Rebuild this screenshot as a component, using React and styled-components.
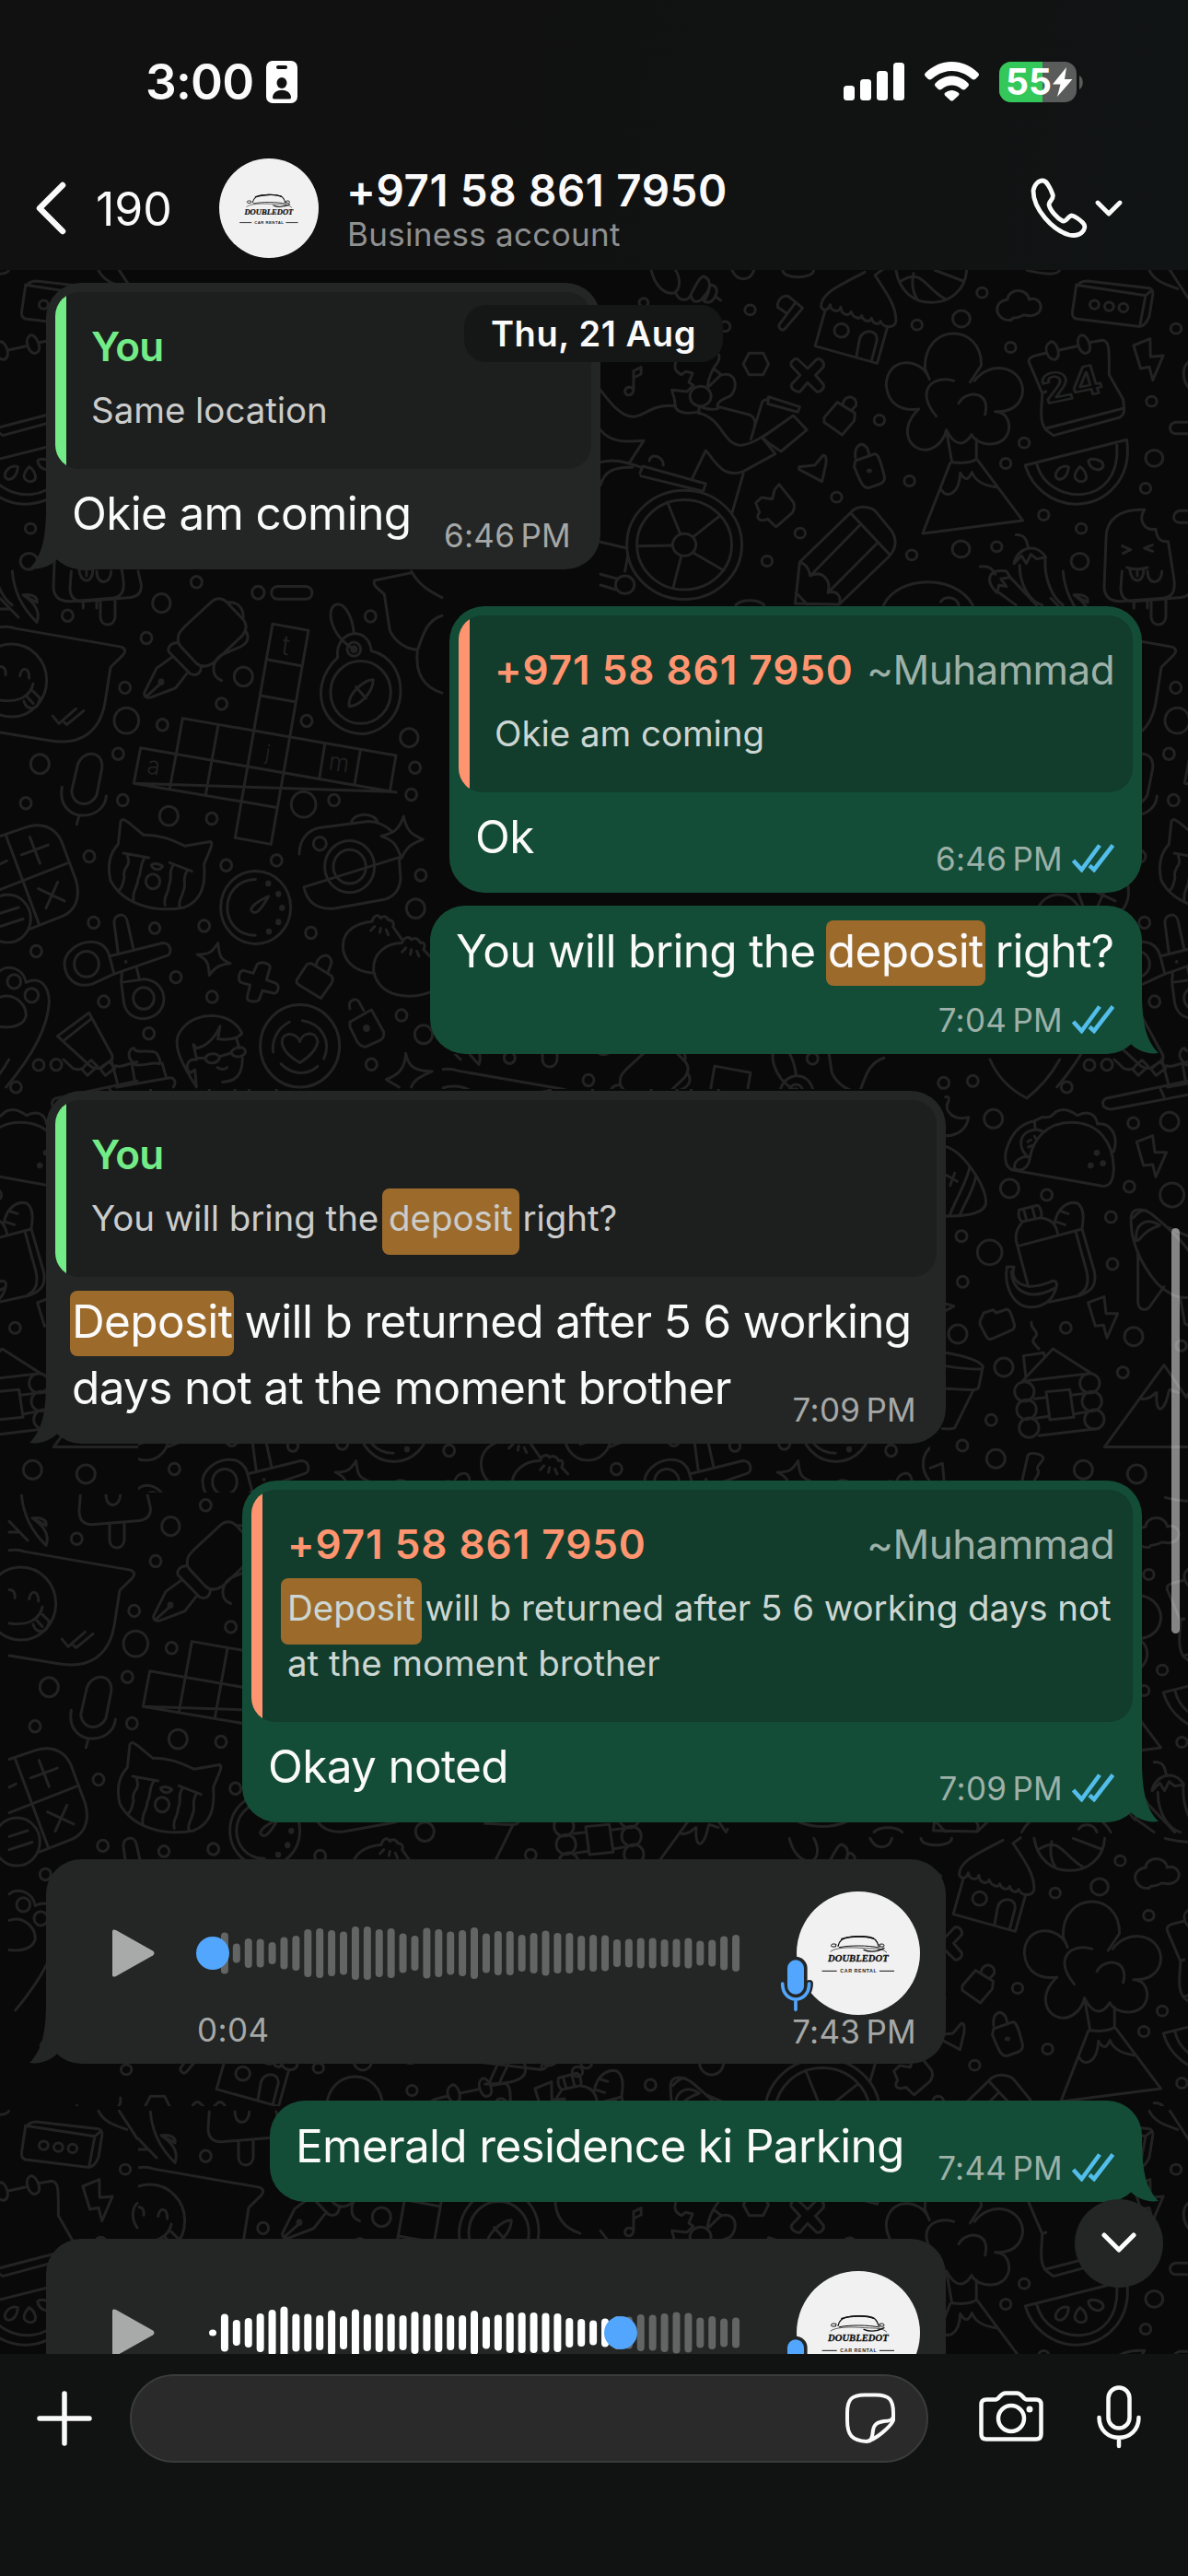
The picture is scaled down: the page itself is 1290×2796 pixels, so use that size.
import styled, { createGlobalStyle, css } from "styled-components";

const GlobalStyle = createGlobalStyle`
  * {
    box-sizing: border-box;
  }
  body {
    margin: 0;
    background-color: #090909;
    font-family: Inter, "Liberation Sans", sans-serif;
    -webkit-font-smoothing: antialiased;
  }
`;

/* wallpaper doodles, each sheet is drawn in its own scale */
const SHEETS = [
  {
    transform: "translate(650 290) scale(0.4082 0.3333)",
    repeat: [[0, 0], [-1141, 0], [0, 1998], [-1141, 1998]],
    squash: 1.16,
    rings: [
      [403, 139, 14], [847, 188, 14], [965, 168, 23], [1020, 83, 14], [1096, 261, 14],
      [1536, 200, 14], [1471, 437, 14], [747, 498, 14], [1132, 572, 14], [1083, 639, 14],
      [827, 696, 14], [1478, 622, 23], [1455, 720, 14], [1184, 807, 14], [633, 749, 14],
      [536, 866, 14], [448, 957, 14], [833, 937, 14], [964, 918, 23], [1059, 910, 14],
      [1284, 851, 14], [1280, 958, 23], [336, 193, 14], [646, 206, 19],
      [1319, 122, 12], [1358, 128, 12], [1396, 132, 12], [120, 115, 12],
      [228, 904, 31], [228, 904, 126], [228, 904, 153], [70, 1034, 25], [271, 420, 28],
    ],
    dots: [[720, 663, 6]],
    paths: [
      "M140 10C150 60 175 90 200 84C222 70 215 30 205 10M205 84C215 115 240 110 245 90C262 50 270 30 280 30C300 40 300 70 280 95C270 115 250 120 247 95M280 110C300 80 290 60 300 58C315 62 320 80 305 105C295 120 280 115 280 105M310 95L325 108",
      "M505 95C490 90 475 105 476 130L500 150M505 95L543 133L496 200C490 210 478 200 480 188L522 118",
      "M708 16C640 60 590 85 592 130C600 145 612 140 616 122C618 145 640 150 644 130C646 158 668 160 672 145C676 165 696 172 700 158C704 178 724 180 726 166C730 185 745 190 750 176C756 200 790 200 791 175C792 130 770 90 735 26L755 8M603 140L576 257L741 313L768 196M686 290L694 235C700 200 745 200 740 240L726 305",
      "M791 10C800 80 840 115 885 115C930 115 975 80 979 10M838 20C830 60 840 90 848 105M805 45C860 0 870 70 920 102M895 10L970 45",
      "M1088 105C1088 70 1140 65 1145 105C1175 90 1195 150 1150 158C1140 160 1130 150 1124 160C1110 170 1100 160 1098 172C1060 180 1040 115 1088 105Z",
      "M1270 65C1280 45 1295 45 1300 45L1465 68C1475 72 1475 80 1474 90L1465 160C1455 190 1445 195 1435 193L1270 168C1258 162 1260 150 1261 140ZM1270 58L1455 92L1472 75M1455 92L1440 190",
      "M385 315L400 280H438L452 315L438 350H400Z",
      "M530 300L556 330L580 300C592 295 602 310 598 325L577 352L598 382C602 395 590 408 580 405L556 376L536 405C524 408 510 395 513 382L536 352L513 322C508 310 520 295 530 300Z",
      "M93 400V338L113 326V348L93 360M93 400C88 425 68 418 70 402C74 385 90 390 93 400",
      "M320 285C325 320 300 310 290 385M205 310C200 330 205 340 220 350L232 340L250 345L240 375L252 385L235 405L195 400C198 420 205 430 203 450C205 475 240 480 268 470M330 350C370 340 370 400 350 420C330 430 310 440 318 460C290 470 280 455 268 455L265 475M308 332L326 350L292 390",
      "M5 400C30 440 60 490 95 487C130 480 140 445 205 452M265 475C330 490 330 580 380 580C410 575 440 550 480 515M320 455L400 480C420 490 420 510 405 560M405 560L435 440C440 430 450 430 452 432M452 422L535 455L530 472L450 445ZM435 555L518 483L554 530L485 600L455 575ZM435 555L470 608L385 665C330 690 310 630 285 597L250 685M5 530C30 570 70 570 120 565L80 640M5 635C40 625 60 630 115 652M110 670L118 648L285 705L278 730L112 680M135 630C140 600 175 620 172 645M385 672L355 800",
      "M600 490L635 440L682 475L680 500L648 546L600 505ZM650 445C655 410 690 420 685 450L672 468",
      "M868 330C865 180 1020 180 1018 320L988 375M868 330L880 365C860 290 765 290 765 385C770 450 810 470 852 462C800 520 820 595 872 595C900 590 920 560 925 530C950 590 975 580 992 545C1010 590 1090 590 1092 520C1090 480 1070 470 1055 470C1110 475 1130 430 1128 395C1120 320 1040 305 1000 370M945 370C890 350 840 400 898 485M958 443C975 400 1045 400 1028 480",
      "M927 545L940 635C970 640 990 638 1005 625V560M935 638L862 867L1128 825L1008 628M912 725C925 755 960 740 962 670C975 700 985 690 993 668C1000 690 1015 710 1062 717",
      "M683 620C680 580 700 565 715 590L720 610M683 630L735 608C742 608 748 620 760 680C762 690 758 700 750 705L720 718C705 722 700 710 680 650Z",
      "M533 650L575 645L597 613C605 612 606 620 605 640L594 698L533 658Z",
      "M418 768L434 750L462 755L468 725L480 707L518 765C524 780 520 790 515 800L472 846L450 820C430 830 415 820 428 798L418 768Z",
      "M1180 410L1145 310C1142 295 1150 290 1190 280M1225 270L1270 258M1306 245L1340 238C1360 240 1358 270 1358 350L1395 430C1400 470 1400 480 1385 490L1210 548L1190 530C1170 500 1180 450 1180 410L1190 405M1190 525L1395 460M1200 245C1215 230 1235 290 1215 300C1195 305 1180 260 1200 245ZM1283 222C1300 215 1320 275 1297 280C1280 285 1265 235 1283 222Z",
      "M1423 255L1467 233L1468 292L1502 288L1474 368L1465 325L1442 330Z",
      "M1135 645L1405 562C1420 690 1350 770 1270 772C1200 770 1150 710 1135 645ZM1165 636C1190 780 1395 790 1378 572M1222 690C1205 680 1225 640 1250 650C1250 670 1240 695 1222 690ZM1280 650C1295 660 1310 700 1280 698C1260 690 1265 670 1280 650ZM1303 630C1310 620 1345 625 1342 650C1330 670 1305 655 1303 630Z",
      "M523 1095L535 960L670 800C690 770 730 780 740 800L780 860C795 890 790 920 770 945L640 1098ZM670 800L772 933M535 960C555 970 560 985 563 1005C595 985 620 1020 610 1060C640 1050 645 1080 640 1095M563 1005L695 840M610 1060L740 900M525 1060L555 1098",
      "M1110 872C1140 870 1140 900 1143 915M1105 965C1110 920 1160 890 1190 945L1165 950L1150 935L1138 965L1125 940ZM1120 970C1120 1040 1150 1090 1180 1100M1188 950C1185 1020 1210 1080 1235 1100M1015 975C1040 970 1050 985 1055 1000M1060 1060C1030 1030 1030 980 1085 990L1095 1010L1070 1015L1085 1040L1065 1035ZM1065 1060L1110 1100M1095 1010L1165 1100",
      "M1452 790C1390 785 1350 820 1350 880L1345 1040C1345 1080 1370 1088 1390 1088L1500 1078C1530 1075 1535 1050 1530 1010L1515 893C1500 895 1485 890 1482 853C1450 860 1435 820 1452 790ZM1393 908L1415 920L1395 932M1473 905L1452 915L1474 925M1405 978C1420 985 1440 985 1460 978M1413 983C1415 1030 1450 1035 1450 983M1433 985V1005M1424 1088V1110M1460 1085V1110",
      "M183 765L217 868M320 812L252 878M105 908L196 906M333 988L252 930M198 1045L220 940M5 895L75 915M5 1000L50 1015M70 990L78 940M45 1050L5 1035M5 710C15 665 40 650 90 652",
      "M758 1100C800 1000 950 1000 995 1100M910 1090C920 1070 950 1070 958 1100M365 1100C380 1080 425 1080 440 1100M1140 10C1170 20 1220 30 1226 10M355 10C370 50 405 45 413 10M490 10C490 40 570 40 572 10M1465 10C1480 50 1520 60 1540 70M1520 10L1568 100M1568 505H1535C1515 510 1515 540 1535 542H1568M1568 793H1545C1525 800 1525 830 1545 832H1568M1568 310C1550 330 1555 370 1568 390",
    ],
    labels: [{ text: "24", x: 1190, y: 445, size: 128, turn: -14 }],
  },
  {
    transform: "translate(0 620) scale(0.3333 0.3571)",
    repeat: [[0, 0], [1141, 0]],
    squash: 0.97,
    rings: [
      [640, 33, 18], [526, 97, 29], [220, 135, 18], [477, 203, 18], [841, 65, 20], [1207, 137, 18],
      [793, 320, 30], [407, 354, 18], [722, 403, 18], [412, 454, 40], [529, 467, 18], [999, 455, 18],
      [1333, 506, 29], [1352, 597, 18], [1340, 679, 18], [385, 555, 18], [130, 586, 30], [84, 705, 18],
      [400, 696, 18], [550, 744, 30], [690, 752, 18], [989, 709, 40], [1088, 696, 18], [291, 867, 18],
      [737, 894, 18], [901, 879, 18], [1042, 828, 21], [1139, 898, 81], [1139, 898, 53], [1371, 924, 18],
      [1354, 1025, 30], [305, 1068, 18], [504, 1085, 17], [665, 1078, 18], [1013, 1099, 18], [118, 1155, 18],
      [282, 1194, 40], [573, 1234, 18], [468, 1298, 34], [338, 1308, 18], [691, 1294, 18], [1308, 1350, 18],
      [485, 1405, 18], [1210, 1499, 18], [183, 1500, 18], [1380, 1408, 29], [833, 1022, 114],
      [977, 1443, 129], [1175, 368, 98], [1153, 237, 22], [1153, 237, 8], [46, 1247, 22], [103, 1289, 22],
      [38, 332, 114], [498, 943, 23], [25, 1056, 75],
    ],
    dots: [[874, 949, 8], [907, 981, 8], [919, 1023, 8], [907, 1066, 8], [876, 1095, 8], [525, 337, 9], [1194, 1389, 10], [410, 1187, 4]],
    paths: [
      "M0 170C20 168 40 170 50 174L395 230C410 235 410 245 400 255L360 292L342 400C325 490 260 530 165 515L0 490M65 318C70 290 95 290 95 325M0 290C15 290 20 300 18 315M108 342C100 380 60 400 0 392M78 395C85 425 125 425 130 385L108 365M85 378L108 402M172 440L192 463L247 418M210 460L218 466L273 424",
      "M232 0L228 50C228 80 245 92 270 92L425 80C455 75 462 60 460 40L450 0M327 92V140C330 170 370 170 375 140V88M315 0C315 45 362 40 362 0",
      "M40 0C45 60 70 110 120 155C130 130 120 100 75 72L120 95C125 75 100 70 75 72M0 82L60 140M0 115H30",
      "M580 205C580 190 585 185 600 170L690 92C705 80 725 80 740 95L795 150C805 165 803 180 790 195L700 275C680 290 660 295 640 280L590 230C580 220 580 215 580 205ZM740 95C775 90 795 115 792 142M803 185C815 210 800 225 770 235L720 255C690 275 685 320 722 332M580 218C555 215 545 235 550 245L620 312C640 320 655 310 655 290M562 260L510 295L470 370C470 385 480 385 490 384L572 355L608 312M478 380L525 340",
      "M903 46H998C1024 50 1022 82 998 85H903C878 82 878 50 903 46Z",
      "M888 160L1005 180L883 830L766 810ZM870 268L982 288M848 378L962 397M595 447L1290 560L1270 670L438 645M595 447L574 555M458 537L1290 672M458 537L436 645L902 718M711 468L670 680M1058 527L1040 632M1174 545L1155 650M574 555L553 660",
      "M1153 190C1150 150 1130 100 1100 100C1060 105 1070 190 1153 237M1100 262C1090 180 1200 160 1210 242C1340 270 1340 470 1190 494C1060 500 990 360 1100 262M1138 411C1130 370 1190 330 1216 330C1215 370 1170 410 1138 411ZM1160 352L1192 386",
      "M1340 5L1220 28C1215 40 1220 45 1252 70L1270 180C1290 220 1330 238 1360 238M1340 0C1370 50 1410 65 1440 80M1440 135C1390 150 1380 190 1360 240C1350 320 1390 355 1440 370",
      "M250 600C260 540 340 540 332 600L315 680C295 720 240 715 233 670ZM202 656C190 720 240 745 275 742C320 740 345 710 346 683M258 742L250 770",
      "M0 805L85 778C150 760 185 790 200 820L248 940C265 1000 240 1035 200 1050L95 1088M0 968L218 888M20 805L128 1075M97 808L130 888M70 862L157 832M125 965L210 1002M188 945L150 1024M0 890L22 880M0 1040L60 1022M0 1080L75 1057",
      "M385 830L393 760C400 750 405 755 420 765L468 802C520 800 570 820 602 835L685 822C695 825 690 835 665 890C670 950 660 1000 600 1022C500 1040 400 1010 360 940C350 900 355 860 385 830ZM402 857L485 871M553 886L625 912M415 865C430 900 395 900 405 930C400 950 400 960 388 970M470 872C450 905 465 910 450 935C450 960 430 970 435 1000M565 893C545 920 565 925 550 955C550 985 530 985 538 1015M610 910C590 940 610 950 598 970C590 1000 580 1000 585 1020M493 893C500 885 520 890 530 897C520 910 500 910 493 893Z",
      "M832 937C710 940 710 1105 832 1107M875 988C860 995 820 1010 818 1030C830 1050 850 1030 875 988Z",
      "M975 860C975 810 1010 785 1040 780L1200 760C1230 760 1260 775 1275 790M1300 870L1305 930C1305 970 1280 995 1240 1000L1090 1025C1030 1030 1000 1005 990 960ZM1145 762C1160 730 1220 735 1230 762M1315 745C1325 790 1340 800 1378 815C1335 830 1325 840 1308 872C1290 830 1285 820 1242 805C1285 795 1300 785 1315 745Z",
      "M385 1162L372 1070C370 1040 410 1035 415 1065L435 1150M358 1170L530 1130C560 1130 560 1165 545 1168L370 1225L300 1255C240 1270 210 1230 210 1190C215 1130 340 1090 358 1175L372 1225M397 1220L395 1250L470 1240C550 1245 560 1350 470 1360C430 1360 405 1340 402 1300L395 1250M445 1205L453 1235",
      "M710 1130C715 1175 720 1180 750 1192C715 1195 700 1205 682 1228C680 1190 675 1180 643 1165C680 1165 690 1160 710 1130ZM1322 1465C1330 1505 1350 1520 1408 1520C1370 1535 1350 1545 1340 1568M1322 1465C1320 1510 1300 1530 1258 1545L1300 1568",
      "M838 1195C850 1185 880 1190 880 1205L868 1242L900 1253C912 1262 905 1280 895 1283L855 1275L845 1300C840 1312 805 1310 805 1295L815 1258L785 1250C772 1240 780 1215 792 1213L825 1222Z",
      "M968 1240L1000 1195C1010 1190 1015 1192 1020 1195L1080 1230C1088 1240 1082 1250 1078 1255L1045 1298L975 1258C965 1252 965 1245 968 1240ZM1030 1195C1040 1160 1080 1160 1080 1190L1068 1220",
      "M1140 1370L1210 1333L1250 1400C1252 1415 1248 1420 1240 1425L1190 1446C1178 1445 1172 1440 1165 1432L1140 1385ZM1140 1330C1130 1300 1165 1295 1170 1310L1185 1335",
      "M1220 1222C1130 1215 1110 1160 1120 1120C1130 1090 1160 1070 1212 1065C1220 1040 1235 1045 1240 1055C1250 1045 1262 1050 1265 1060C1280 1060 1285 1070 1280 1080L1310 1120M1400 1280C1340 1300 1240 1300 1218 1220C1210 1160 1260 1130 1310 1130C1315 1110 1335 1110 1340 1120C1355 1110 1365 1120 1370 1130C1385 1125 1385 1140 1380 1150L1400 1170M1220 1080L1208 1092M1240 1085L1237 1098M1258 1090L1265 1105M1322 1145L1310 1157M1340 1150L1337 1165M1358 1155L1365 1170",
      "M977 1430C965 1395 905 1400 922 1445C930 1465 960 1485 977 1494C1000 1480 1030 1460 1035 1430C1030 1395 985 1400 977 1430ZM943 1370C900 1390 885 1430 890 1462M985 1366C1050 1375 1080 1430 1055 1482M915 1497C950 1530 1000 1535 1035 1505",
      "M187 1413L290 1342L365 1470C370 1485 360 1490 350 1495L325 1510C315 1512 305 1510 295 1505ZM210 1425L298 1360M327 1513L355 1490L375 1510L343 1533Z",
      "M640 1568C580 1480 560 1430 590 1395C640 1330 760 1340 788 1405C770 1425 740 1425 710 1422L717 1383C700 1420 670 1445 640 1450L630 1438L640 1480L670 1480M770 1420L780 1450M668 1480C680 1460 715 1465 715 1480C705 1500 675 1500 668 1480ZM752 1462C770 1440 800 1445 800 1462C790 1480 760 1480 752 1462ZM715 1475L752 1465M708 1508C715 1515 735 1515 740 1508M790 1480C790 1530 770 1550 725 1553M640 1485C610 1480 600 1510 620 1525L635 1515L640 1568",
      "M0 1215C25 1195 75 1205 85 1250C130 1230 160 1260 160 1310C155 1400 90 1490 20 1568M0 1295C40 1280 85 1310 85 1350C80 1380 40 1390 0 1385M430 1490C410 1470 425 1450 437 1450C440 1470 490 1450 510 1465C520 1480 525 1490 520 1497C490 1490 480 1505 440 1500ZM430 1500L440 1555M528 1495L542 1540M380 1568L550 1540C570 1538 575 1555 565 1568",
    ],
    labels: [
      { text: "t", x: 914, y: 252, size: 84, turn: 9 },
      { text: "j", x: 862, y: 572, size: 64, turn: 9 },
      { text: "a", x: 476, y: 614, size: 76, turn: 9 },
      { text: "m", x: 1068, y: 602, size: 76, turn: 9 },
    ],
  },
  {
    transform: "translate(1010 1150) scale(0.3333)",
    repeat: [[0, 0], [-1141, 0]],
    squash: 1,
    rings: [
      [44, 76, 18], [139, 70, 18], [519, 18, 18], [445, 90, 18], [206, 193, 30], [662, 207, 18],
      [780, 202, 30], [259, 420, 30], [380, 441, 18], [649, 414, 18], [788, 441, 39], [589, 513, 18],
      [102, 575, 18], [194, 628, 40], [594, 666, 18], [106, 724, 18], [90, 894, 30], [442, 874, 18],
      [663, 902, 30], [240, 1002, 30], [628, 1019, 18], [199, 1174, 18], [105, 1257, 18], [214, 1300, 30],
      [499, 1336, 30], [673, 1350, 30], [307, 1081, 32], [314, 1140, 32], [322, 1199, 32], [520, 1054, 32],
      [527, 1113, 32], [535, 1172, 32], [818, 932, 17],
    ],
    dots: [[543, 304, 9], [563, 338, 9], [523, 345, 9]],
    paths: [
      "M195 0C220 60 265 100 315 126C360 90 400 40 422 0M600 0L630 28C650 38 665 30 670 20L690 2L710 22L678 52L660 32M755 0L775 75M770 20C790 30 810 10 840 8M840 70L580 125C560 125 550 160 590 162L840 115M750 95L762 122",
      "M50 122C60 120 62 122 60 135C40 170 80 200 125 188C120 225 90 250 50 248",
      "M270 360C240 350 240 310 255 275C275 225 310 205 340 200L365 188C390 190 395 185 410 170C440 155 460 170 480 182C510 165 540 175 545 210C590 205 615 250 598 300M270 360L560 412C585 415 598 395 598 350C595 270 550 205 460 205C380 205 335 260 325 320C320 360 290 365 275 355C270 325 310 310 325 320M340 200L342 222M325 320C285 300 280 230 350 228L370 235M318 268L328 262M320 285L332 280M340 250L345 258",
      "M50 283C110 300 180 410 182 465C180 505 110 510 50 510M128 352C120 400 80 460 65 505M148 385C140 430 110 470 98 505M50 375L88 397M80 370L65 410",
      "M673 268L725 248L732 302L770 302L735 382L725 342L695 345ZM515 792L567 772L573 827L611 827L576 907L565 865L538 868Z",
      "M290 490L350 475C360 480 365 500 362 515L300 528C290 522 285 505 290 490ZM305 490L315 525M333 482L342 518M300 530C285 550 278 560 280 590L320 740M365 517C395 520 410 540 415 565M405 535C415 480 450 460 480 468C510 490 495 540 495 550M428 495L450 502M415 530L440 538M285 608L495 552L535 690C545 740 520 755 490 768L388 790M475 563L510 690C520 735 505 755 485 765M250 675H273C260 720 300 760 390 725C405 715 415 725 412 738C400 790 360 810 320 806C270 800 240 740 250 675ZM265 690C265 740 310 795 405 745",
      "M163 850L175 825L205 815L215 825L250 813C258 815 262 820 275 865C275 875 272 878 268 880L200 910C190 912 185 908 182 900L162 862Z",
      "M330 855C325 880 355 880 345 900C325 920 340 925 354 942M312 1035L304 965L370 955L374 970M300 1048L400 942L525 1022ZM378 1082L455 1075L468 1165L390 1173ZM340 1105L380 1100M345 1168L388 1162M460 1093L498 1088M468 1155L505 1148M355 1225L535 1203",
      "M655 510C660 480 700 485 730 510C790 560 820 590 840 620M655 510C650 580 680 660 740 730C770 760 810 780 840 775M672 590C665 540 700 510 748 540C720 550 700 560 680 588ZM677 625V790C680 820 705 818 715 805L762 740M815 778L830 860L840 865M770 545L840 575M662 515C680 495 690 490 705 492",
      "M568 1262L762 995L835 1100L840 1090M568 1262H840M690 1105C720 1110 735 1080 738 1085C735 1130 745 1150 760 1130C775 1110 775 1080 780 1075L810 1085",
      "M50 955C110 965 160 980 172 1000L158 1068C155 1080 130 1075 50 1072M50 998C90 1005 120 1010 170 1008M140 1078L80 1200C70 1205 60 1203 40 1202M300 1370L318 1290C325 1275 370 1285 368 1300C365 1315 345 1320 350 1335C360 1345 345 1360 340 1370M0 1330L40 1315L45 1368M50 795L78 803L50 818",
    ],
    labels: [],
  },
];

/* windows between the repeated sheets: [x, y, width, height, [sheet, dx, dy]...] */
const PATCHES = [
  [480, 1144, 530, 38, [1, 480, 480]],
  [150, 1182, 860, 438, [1, 150, 562], [1, 630, 562]],
  [0, 1622, 1290, 664, [1, 10, 1002], [2, -500, 472], [0, 150, 1332], [0, 150, 1702], [0, -650, 1892], [2, -500, 942]],
  [150, 2290, 500, 265, [1, 150, 1672]],
];

const Sheet = ({ index, dx, dy }) => {
  const { transform, squash, rings, dots, paths, labels } = SHEETS[index];
  // lettering only goes on the first copy, the others run under bubbles and edges
  const lettered = dx === 0 && dy === 0;
  return (
    <g transform={`translate(${dx} ${dy})`}>
      <g transform={transform}>
        {rings.map(([cx, cy, r], i) => (
          <ellipse key={i} cx={cx} cy={cy} rx={r} ry={r * squash} />
        ))}
        {dots.map(([cx, cy, r], i) => (
          <circle key={i} cx={cx} cy={cy} r={r} fill="#232323" />
        ))}
        {paths.map((d, i) => (
          <path key={i} d={d} />
        ))}
        {lettered &&
          labels.map(({ text, x, y, size, turn }) => (
            <text
              key={text}
              x={x}
              y={y}
              fontSize={size}
              fontWeight={text === "24" ? 600 : 300}
              transform={`rotate(${turn} ${x} ${y})`}
              fill={text === "24" ? "none" : "#232323"}
              stroke={text === "24" ? "#232323" : "none"}
              strokeWidth="7"
            >
              {text}
            </text>
          ))}
      </g>
    </g>
  );
};

const Wallpaper = () => (
  <WallpaperSvg viewBox="0 293 1290 2262" aria-hidden="true">
    {SHEETS.map((sheet, s) =>
      sheet.repeat.map(([dx, dy]) => <Sheet key={`${s}:${dx}:${dy}`} index={s} dx={dx} dy={dy} />)
    )}
    {PATCHES.map(([x, y, w, h, ...parts]) => (
      <svg key={y} x={x} y={y} width={w} height={h} viewBox={`${x} ${y} ${w} ${h}`}>
        {parts.map(([index, dx, dy]) => (
          <Sheet key={`${index}:${dx}:${dy}`} index={index} dx={dx} dy={dy} />
        ))}
      </svg>
    ))}
  </WallpaperSvg>
);

const Logo = () => (
  <svg viewBox="75 39 402 402" width="100%" height="100%">
    <circle cx="276" cy="240" r="201" fill="#f1f1f1" />
    <g fill="none" stroke="#111" strokeLinecap="round">
      <path d="M210 217C214 198 226 189 248 187C280 183 318 186 331 196C337 202 340 210 342 217" strokeWidth="4" />
      <path d="M222 194C250 185 300 182 326 192" strokeWidth="5" />
      <path d="M214 221C250 214 305 214 345 222" strokeWidth="3" />
      <path d="M186 234C200 222 245 220 285 223C320 226 355 222 368 237" strokeWidth="2" />
      <path d="M294 229C315 238 340 234 360 224" strokeWidth="4" />
      <path d="M203 211C190 207 184 213 190 219H201Z" strokeWidth="3" />
      <path d="M346 211C356 208 364 212 358 219H348Z" strokeWidth="3" />
      <path d="M159 298H205M346 298H392" strokeWidth="3" />
    </g>
    <text
      x="177"
      y="266"
      fontFamily="Liberation Serif, serif"
      fontSize="29"
      fontWeight="700"
      fontStyle="italic"
      textLength="197"
      lengthAdjust="spacingAndGlyphs"
      fill="#0c0c0c"
      stroke="#0c0c0c"
      strokeWidth="0.8"
    >
      DOUBLEDOT
    </text>
    <text
      x="217"
      y="304"
      fontFamily="Liberation Sans, sans-serif"
      fontSize="16"
      fontWeight="700"
      textLength="118"
      fill="#222"
    >
      CAR RENTAL
    </text>
  </svg>
);

const Ticks = () => (
  <svg width="46" height="31" viewBox="0 0 46 31" fill="none" stroke="#53bdeb" strokeWidth="4.6">
    <path d="M1.5 18L10.500 28L30 1.500" />
    <path d="M19 23.500L24 28L44.500 1.500" />
  </svg>
);

const Tail = ({ out }) => (
  <TailSvg $out={out} width="36" height="60" viewBox="0 0 36 60">
    <path d="M18 0C17 24 15 44 0 59C12 61 24 56 31 48L36 0Z" />
  </TailSvg>
);

const Meta = ({ time, read }) => (
  <MetaRow $read={read}>
    <span>{time}</span>
    {read && <Ticks />}
  </MetaRow>
);

const ReplyQuote = ({ out, name, alias, children }) => (
  <Quote $out={out}>
    <Accent $out={out} />
    <QuoteBody>
      <QuoteHead>
        <QuoteName $out={out}>{name}</QuoteName>
        {alias && <Alias>{alias}</Alias>}
      </QuoteHead>
      <QuoteText $out={out}>{children}</QuoteText>
    </QuoteBody>
  </Quote>
);

const Message = ({ out, width, gap, quote, time, tail = true, stacked, children }) => (
  <Bubble $out={out} $width={width} $gap={gap}>
    {quote}
    <Content $quoted={!!quote} $stacked={stacked}>
      <Text $stacked={stacked}>{children}</Text>
      <Meta time={time} read={out} />
    </Content>
    {tail && <Tail out={out} />}
  </Bubble>
);

const STEP = 12.91;

const VoiceMessage = ({ levels, position, duration, time }) => (
  <Bubble $width={977}>
    <VoiceRow>
      <PlayIcon viewBox="0 0 46 52">
        <path d="M0 2.500C0 0 2 0 4 1L44 23.500Q47 26 44 28.500L4 51C2 52 0 52 0 49.500Z" />
      </PlayIcon>
      <Wave viewBox="0 0 600 60">
        {levels.map((level, i) => (
          <rect
            key={i}
            x={14 + i * STEP}
            y={30 - level / 2}
            width="8"
            height={level}
            rx="4"
            fill={14 + i * STEP < position ? "#ffffff" : "#636564"}
          />
        ))}
        <circle cx={position} cy="30" r="18" fill="#53a6fd" />
      </Wave>
      <VoiceAvatar>
        <Logo />
        <MicBadge viewBox="12 250 130 192">
          <g fill="none" stroke="#232625" strokeWidth="24" strokeLinecap="round">
            <path d="M72 290V349" strokeWidth="76" />
            <path d="M29 340C29 405 117 405 117 340" />
          </g>
          <rect x="45" y="263" width="54" height="112" rx="27" fill="#53a6fd" />
          <path
            d="M29 340C29 408 116 408 116 340M72 391V425"
            fill="none"
            stroke="#53a6fd"
            strokeWidth="11"
            strokeLinecap="round"
          />
        </MicBadge>
      </VoiceAvatar>
    </VoiceRow>
    {time && (
      <VoiceFooter>
        <Duration>{duration}</Duration>
        <Meta time={time} />
      </VoiceFooter>
    )}
    {time && <Tail />}
  </Bubble>
);

const FIRST_NOTE = [
  7, 45, 21, 32, 31, 24, 35, 38, 52, 54, 50, 47, 58, 58, 52, 54, 43, 38, 55, 52, 47, 50, 56, 43, 48,
  48, 40, 44, 49, 44, 44, 38, 40, 39, 30, 31, 33, 33, 30, 31, 33, 27, 29, 37, 40,
];

const SECOND_NOTE = [
  7, 41, 28, 32, 42, 50, 57, 41, 41, 38, 49, 36, 51, 40, 42, 41, 38, 46, 40, 42, 38, 38, 48, 35, 39,
  44, 44, 44, 43, 42, 32, 30, 27, 31, 35, 35, 40, 39, 42, 45, 43, 33, 36, 31, 33,
];

const StatusIcons = () => (
  <svg width="262" height="46" viewBox="0 0 262 46">
    <g fill="#fff">
      <rect x="0" y="27" width="12" height="16" rx="3.500" />
      <rect x="18" y="20" width="12" height="23" rx="3.500" />
      <rect x="36" y="11" width="12" height="32" rx="3.500" />
      <rect x="54" y="2" width="12" height="41" rx="3.500" />
      <path d="M89 13C105 -3 130 -3 146 13Q148 15 146 17L143 20Q141 21 139 19.500C126 8 109 8 96 19.500Q94 21 92 20L89 17Q87 15 89 13Z" />
      <path d="M100 24C110 14 125 14 135 24Q137 26 135 28L132 31Q130 32 128 30.500C122 25 113 25 107 30.500Q105 32 103 31L100 28Q98 26 100 24Z" />
      <path d="M110.500 34.500C115 31 120 31 124.500 34.500Q126.500 36 124.500 38L119 43Q117.500 44 116 43L110.500 38Q108.500 36 110.500 34.500Z" />
    </g>
    <clipPath id="cell">
      <rect x="169" y="1" width="84" height="44" rx="13" />
    </clipPath>
    <g clipPath="url(#cell)">
      <rect x="169" y="0" width="84" height="46" fill="#5a5c5b" />
      <rect x="169" y="0" width="47" height="46" fill="#34c759" />
    </g>
    <path d="M256 16C261 18 261 29 256 31Z" fill="#5a5c5b" />
    <text x="176" y="37" fontFamily="Inter, sans-serif" fontSize="39" fontWeight="700" textLength="50" lengthAdjust="spacingAndGlyphs" fill="#fff">
      55
    </text>
    <path d="M242 7L227 25.500H235.500L232 39L248.500 20H240Z" fill="#fff" />
  </svg>
);

const App = () => (
  <Screen>
    <GlobalStyle />
    <Header>
      <StatusBar>
        <Clock>3:00</Clock>
        <svg width="34" height="46" viewBox="0 0 34 46">
          <rect width="34" height="46" rx="7" fill="#fff" />
          <rect x="11" y="5" width="12" height="4" rx="2" fill="#111" />
          <ellipse cx="17" cy="24" rx="5.500" ry="6" fill="#111" />
          <path d="M7 40C7 29 27 29 27 40Q27 41.500 25 41.500H9Q7 41.500 7 40Z" fill="#111" />
        </svg>
        <Spacer />
        <StatusIcons />
      </StatusBar>
      <NavBar>
        <svg width="33" height="58" viewBox="0 0 33 58" fill="none" stroke="#fafafa" strokeWidth="6.500" strokeLinecap="round" strokeLinejoin="round">
          <path d="M29 4L4 29L29 54" />
        </svg>
        <Unread>190</Unread>
        <HeaderAvatar>
          <Logo />
        </HeaderAvatar>
        <Contact>
          <ContactName>+971 58 861 7950</ContactName>
          <ContactNote>Business account</ContactNote>
        </Contact>
        <svg width="62" height="66" viewBox="0 0 62 66" fill="none" stroke="#fafafa" strokeWidth="4.800" strokeLinejoin="round">
          <path d="M3 14C4 7 9 3 13 3C17 3 19 7 22 13L24 18C26 23 20 25 20 29C21 35 29 44 35 47C39 48 41 41 45 41C49 42 54 46 57 49C60 52 59 56 56 59C52 63 47 63 42 62C24 57 3 34 3 14Z" />
        </svg>
        <HeaderChevron width="30" height="18" viewBox="0 0 30 18" fill="none" stroke="#fafafa" strokeWidth="4.800" strokeLinecap="round" strokeLinejoin="round">
          <path d="M3 3L15 15L27 3" />
        </HeaderChevron>
      </NavBar>
    </Header>

    <Chat>
      <Wallpaper />
      <DatePill>Thu, 21 Aug</DatePill>
      <Message width={602} gap={40} time="6:46 PM" quote={<ReplyQuote name="You">Same location</ReplyQuote>}>
        Okie am coming
      </Message>
      <Message
        out
        width={752}
        gap={14}
        time="6:46 PM"
        tail={false}
        quote={
          <ReplyQuote out name="+971 58 861 7950" alias="~Muhammad">
            Okie am coming
          </ReplyQuote>
        }
      >
        Ok
      </Message>
      <Message out stacked width={773} gap={40} time="7:04 PM">
        You will bring the <Mark>deposit</Mark> right?
      </Message>
      <Message
        width={977}
        gap={40}
        time="7:09 PM"
        quote={
          <ReplyQuote name="You">
            You will bring the <Mark $small>deposit</Mark> right?
          </ReplyQuote>
        }
      >
        <Mark>Deposit</Mark> will b returned after 5 6 working
        <br />
        days not at the moment brother
      </Message>
      <Message
        out
        width={977}
        gap={40}
        time="7:09 PM"
        quote={
          <ReplyQuote out name="+971 58 861 7950" alias="~Muhammad">
            <Mark $small>Deposit</Mark> will b returned after 5 6 working days not
            <br />
            at the moment brother
          </ReplyQuote>
        }
      >
        Okay noted
      </Message>
      <VoiceMessage levels={FIRST_NOTE} position={18} duration="0:04" time="7:43 PM" />
      <Message out width={947} gap={40} time="7:44 PM">
        Emerald residence ki Parking
      </Message>
      <VoiceMessage levels={SECOND_NOTE} position={461} />
      <ScrollThumb />
      <JumpButton>
        <svg width="38" height="24" viewBox="0 0 38 24" fill="none" stroke="#fff" strokeWidth="5" strokeLinecap="round" strokeLinejoin="round">
          <path d="M3 3L19 19L35 3" />
        </svg>
      </JumpButton>
    </Chat>

    <Composer>
      <svg width="60" height="60" viewBox="0 0 60 60" stroke="#fafafa" strokeWidth="5.500" strokeLinecap="round">
        <path d="M30 3V57M3 30H57" />
      </svg>
      <Field>
        <svg width="56" height="56" viewBox="0 0 56 56" fill="none" stroke="#fafafa" strokeWidth="4">
          <path d="M24 53C8 52 3 46 3 30V22C3 7 8 2.500 22 2.500H34C48 2.500 53 7 53 22V30C50 37 34 51 24 53Z" strokeLinejoin="round" />
          <path d="M26 53C31 50 30 46 31 41C32 34 36 32 43 31C49 31 52 30 53 26" />
        </svg>
      </Field>
      <CameraIcon width="70" height="56" viewBox="0 0 70 56" fill="none" stroke="#fafafa" strokeWidth="4.500">
        <path d="M8 9.500H18C22 9.500 23 2.500 29 2.500H41C47 2.500 48 9.500 52 9.500H62Q67.500 9.500 67.500 15V47Q67.500 52.500 62 52.500H8Q2.500 52.500 2.500 47V15Q2.500 9.500 8 9.500Z" />
        <circle cx="35" cy="30" r="14" />
        <circle cx="55" cy="20" r="3.500" fill="#fafafa" stroke="none" />
      </CameraIcon>
      <svg width="48" height="69" viewBox="0 0 48 69" fill="none" stroke="#fafafa" strokeWidth="4.500" strokeLinecap="round">
        <rect x="12.500" y="2.500" width="23" height="44" rx="11.500" />
        <path d="M2.500 35C2.500 64 45.500 64 45.500 35M24 57V66" />
      </svg>
    </Composer>
  </Screen>
);

const Screen = styled.div`
  width: 1290px;
  height: 2796px;
  display: flex;
  flex-direction: column;
  overflow: hidden;
  background-color: #111312;
  color: #fafafa;
`;

const Header = styled.header`
  height: 293px;
  flex: none;
  background: linear-gradient(100deg, #111111 40%, #111414 100%);
`;

const StatusBar = styled.div`
  display: flex;
  align-items: center;
  height: 110px;
  margin-top: 32px;
  padding: 3px 112px 0 158px;
`;

const Clock = styled.span`
  width: 131px;
  font-size: 53px;
  font-weight: 600;
  line-height: 60px;
  letter-spacing: -0.8px;
`;

const Spacer = styled.div`
  flex: 1;
`;

const NavBar = styled.div`
  display: flex;
  align-items: center;
  height: 112px;
  margin-top: 28px;
  padding: 0 71px 0 39px;
`;

const Unread = styled.span`
  width: 130px;
  margin-left: 32px;
  padding-top: 2px;
  font-size: 50px;
  letter-spacing: 0;
`;

const HeaderAvatar = styled.div`
  width: 108px;
  height: 108px;
  margin-left: 4px;
`;

const Contact = styled.div`
  flex: 1;
  margin-left: 30px;
  padding-top: 3px;
  white-space: nowrap;
`;

const ContactName = styled.div`
  font-size: 47.5px;
  font-weight: 600;
  line-height: 52px;
  letter-spacing: 0.6px;
`;

const ContactNote = styled.div`
  margin-left: 1px;
  font-size: 35px;
  line-height: 42px;
  letter-spacing: 0.3px;
  color: #8f9090;
`;

const HeaderChevron = styled.svg`
  margin-left: 8px;
`;

const Chat = styled.main`
  position: relative;
  flex: none;
  display: flex;
  flex-direction: column;
  height: 2262px;
  padding: 14px 50px 0;
  overflow: hidden;
  background-color: #090909;
`;

const WallpaperSvg = styled.svg`
  position: absolute;
  inset: 0;
  width: 1290px;
  height: 2262px;
  fill: none;
  stroke: #232323;
  stroke-width: 3px;
  stroke-linecap: round;
  stroke-linejoin: round;
  path,
  ellipse {
    vector-effect: non-scaling-stroke;
  }
`;

const DatePill = styled.div`
  position: absolute;
  z-index: 2;
  top: 38px;
  left: 504px;
  width: 281px;
  height: 62px;
  border-radius: 24px;
  background-color: #151716;
  font-size: 38px;
  font-weight: 600;
  line-height: 62px;
  letter-spacing: 0.6px;
  text-align: center;
  white-space: nowrap;
`;

const Bubble = styled.article`
  position: relative;
  flex: none;
  align-self: ${({ $out }) => ($out ? "flex-end" : "flex-start")};
  width: ${({ $width }) => $width}px;
  margin-bottom: ${({ $gap = 40 }) => $gap}px;
  border-radius: 38px;
  background-color: ${({ $out }) => ($out ? "#144d37" : "#232625")};
`;

const TailSvg = styled.svg`
  position: absolute;
  bottom: 0;
  ${({ $out }) =>
    $out
      ? css`
          right: -18px;
          transform: scaleX(-1);
          fill: #144d37;
        `
      : css`
          left: -18px;
          fill: #232625;
        `}
`;

const Quote = styled.div`
  display: flex;
  margin: 0 10px;
  overflow: hidden;
  border-radius: 26px;
  background-color: ${({ $out }) => ($out ? "#123c2b" : "#1d1f1e")};
  position: relative;
  top: 10px;
`;

const Accent = styled.div`
  width: 12px;
  flex: none;
  background-color: ${({ $out }) => ($out ? "#ff9470" : "#73ec87")};
`;

const QuoteBody = styled.div`
  flex: 1;
  min-width: 0;
  padding: 32px 20px 34px 27px;
  white-space: nowrap;
`;

const QuoteHead = styled.div`
  display: flex;
  justify-content: space-between;
  margin-bottom: 12px;
  font-size: 44px;
  line-height: 54px;
`;

const QuoteName = styled.span`
  font-weight: 600;
  letter-spacing: ${({ $out }) => ($out ? "0.95px" : "-0.8px")};
  color: ${({ $out }) => ($out ? "#ff9470" : "#73ec87")};
`;

const Alias = styled.span`
  letter-spacing: -0.6px;
  color: #9db1a9;
`;

const QuoteText = styled.div`
  font-size: 38.5px;
  line-height: 60px;
  letter-spacing: -0.05px;
  color: ${({ $out }) => ($out ? "#ccd6d2" : "#cbcccb")};
`;

const Content = styled.div`
  display: flex;
  flex-direction: ${({ $stacked }) => ($stacked ? "column" : "row")};
  align-items: flex-end;
  padding: ${({ $quoted }) => ($quoted ? 22 : 13)}px 30px 15px 28px;
`;

const Text = styled.div`
  flex: 1;
  min-width: 0;
  align-self: ${({ $stacked }) => ($stacked ? "stretch" : "auto")};
  margin-bottom: ${({ $stacked }) => ($stacked ? 17 : 10)}px;
  font-size: 49.5px;
  line-height: 72px;
  letter-spacing: -0.67px;
  white-space: nowrap;
`;

const Mark = styled.mark`
  border-radius: 8px;
  color: inherit;
  background-color: #9c6b2c;
  ${({ $small }) =>
    $small
      ? css`
          margin: 0 -7px;
          padding: 9px 7px 17px;
        `
      : css`
          margin: 0 -2px;
          padding: 3px 2px 8px;
        `}
`;

const MetaRow = styled.div`
  flex: none;
  display: flex;
  align-items: center;
  gap: 10px;
  height: 44px;
  margin-right: ${({ $read }) => ($read ? 0 : 2)}px;
  font-size: 35px;
  line-height: 44px;
  letter-spacing: 0.3px;
  word-spacing: -4px;
  white-space: nowrap;
  color: ${({ $read }) => ($read ? "#9db1a9" : "#a6a8a7")};
  article & svg {
    margin-top: -2px;
  }
`;

const VoiceRow = styled.div`
  display: flex;
  align-items: center;
  padding: 35px 28px 0 72px;
`;

const PlayIcon = styled.svg`
  width: 46px;
  height: 52px;
  fill: #a8aaa9;
`;

const Wave = styled.svg`
  width: 600px;
  height: 60px;
  margin-left: 45px;
`;

const VoiceAvatar = styled.div`
  position: relative;
  width: 134px;
  height: 134px;
  margin-left: auto;
`;

const MicBadge = styled.svg`
  position: absolute;
  left: -21px;
  top: 70px;
  width: 43.3px;
  height: 64px;
  overflow: visible;
`;

const VoiceFooter = styled.div`
  display: flex;
  justify-content: space-between;
  margin-top: -4px;
  padding: 0 30px 13px 164px;
`;

const Duration = styled.span`
  margin-top: -2px;
  font-size: 35px;
  line-height: 44px;
  letter-spacing: 0.4px;
  color: #a6a8a7;
`;

const ScrollThumb = styled.div`
  position: absolute;
  top: 1040px;
  right: 9px;
  width: 9px;
  height: 440px;
  border-radius: 5px;
  background-color: rgba(255, 255, 255, 0.5);
`;

const JumpButton = styled.div`
  position: absolute;
  top: 2094px;
  left: 1167px;
  width: 96px;
  height: 96px;
  display: flex;
  align-items: center;
  justify-content: center;
  border-radius: 50%;
  background-color: #232625;
`;

const Composer = styled.footer`
  flex: 1;
  display: flex;
  align-items: flex-start;
  padding: 22px 51px 0 40px;
  > svg {
    margin-top: 18px;
  }
  > svg:last-child {
    margin-top: 12px;
    margin-left: 58px;
  }
`;

const Field = styled.div`
  display: flex;
  align-items: center;
  justify-content: flex-end;
  width: 867px;
  height: 96px;
  margin-left: 41px;
  padding-right: 33px;
  border: 2px solid #3a3b3b;
  border-radius: 48px;
  background-color: #2a2a2a;
`;

const CameraIcon = styled.svg`
  margin-left: 55px;
`;

export default App;
